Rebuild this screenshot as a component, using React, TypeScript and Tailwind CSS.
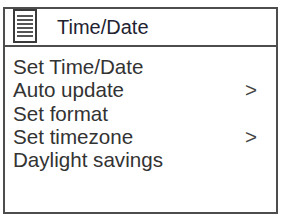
const items: { label: string; arrow?: boolean }[] = [
  { label: 'Set Time/Date' },
  { label: 'Auto update', arrow: true },
  { label: 'Set format' },
  { label: 'Set timezone', arrow: true },
  { label: 'Daylight savings' },
];

function MenuIcon() {
  return (
    <div className="w-[24px] h-[34px] border-2 border-[#3a3a3a] flex flex-col justify-center gap-[2px] px-[2px]">
      {[0, 1, 2, 3, 4, 5].map((i) => (
        <div key={i} className="h-[2px] bg-[#555]" />
      ))}
    </div>
  );
}

export default function App() {
  return (
    <div className="w-[281px] h-[215px] bg-white pt-[7px] pl-[3px]" style={{ fontFamily: '"Liberation Sans", Arial, sans-serif' }}>
      <div className="w-[275px] h-[207px] border-2 border-[#4d4d4d] flex flex-col">
        {/* Header */}
        <div className="h-[38px] border-b-2 border-[#4d4d4d] flex items-start pl-[8px]">
          <MenuIcon />
          <div className="ml-[20px] mt-[7px] text-[20px] leading-[23px] text-[#222230]">Time/Date</div>
        </div>

        {/* Menu */}
        <div className="pt-[8px] pl-[8px] pr-[19px] text-[20.6px] leading-[23.25px] text-[#333]">
          {items.map((it) => (
            <div key={it.label} className="flex justify-between">
              <span>{it.label}</span>
              {it.arrow && <span className="text-[#444]">&gt;</span>}
            </div>
          ))}
        </div>
      </div>
    </div>
  );
}
